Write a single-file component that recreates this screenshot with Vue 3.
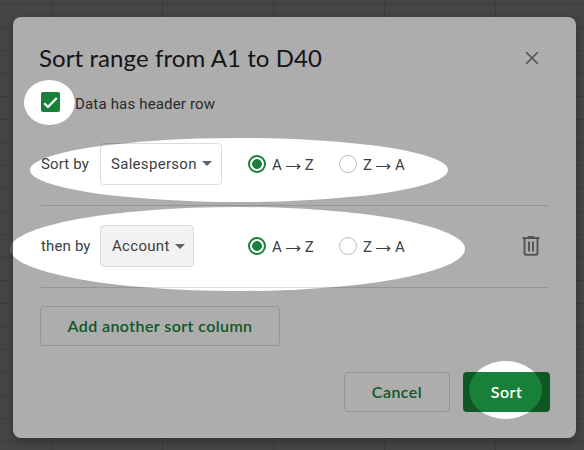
<script setup>
import { ref } from 'vue'

const hasHeader = ref(true)
const rows = ref([
  { label: 'Sort by', column: 'Salesperson', order: 'asc' },
  { label: 'then by', column: 'Account', order: 'asc', removable: true },
])
const orders = [
  { id: 'asc', from: 'A', to: 'Z' },
  { id: 'desc', from: 'Z', to: 'A' },
]
const spotlights = [
  { cx: 49.4, cy: 102.5, rx: 25.4, ry: 22.5 },
  { cx: 239, cy: 170, rx: 209, ry: 32 },
  { cx: 237.5, cy: 249, rx: 227.5, ry: 42 },
  { cx: 505.5, cy: 390, rx: 36.5, ry: 29 },
]
</script>

<template>
  <main class="sheet">
    <section class="dialog">
      <header class="head">
        <h1 class="title">Sort range from A1 to D40</h1>
        <button class="close" aria-label="Close">
          <svg width="14" height="14" viewBox="0 0 14 14"><path d="M1.2 1.2 12.8 12.8M12.8 1.2 1.2 12.8" /></svg>
        </button>
      </header>

      <div class="header-option" @click="hasHeader = !hasHeader">
        <span class="checkbox">
          <svg v-if="hasHeader" width="19" height="20" viewBox="0 0 19 20"><path d="M3.2 11.2 7 15 15.8 6" /></svg>
        </span>
        <span class="option-text">Data has header row</span>
      </div>

      <div v-for="row in rows" :key="row.label" class="sort-row">
        <span class="row-label">{{ row.label }}</span>
        <div class="select-cell">
          <button class="select" :class="{ shaded: row.removable }">
            <span class="select-text">{{ row.column }}</span><i class="caret"></i>
          </button>
        </div>
        <div v-for="o in orders" :key="o.id" class="order" @click="row.order = o.id">
          <span class="radio" :class="{ on: row.order === o.id }"></span>
          <span class="order-text">
            <span class="letter">{{ o.from }}</span>
            <svg width="15" height="7" viewBox="0 0 15 7"><path d="M0 3.5H14M11 1 13.8 3.5 11 6" /></svg>
            <span class="letter">{{ o.to }}</span>
          </span>
        </div>
        <button v-if="row.removable" class="trash" aria-label="Remove">
          <svg width="18" height="20" viewBox="0 0 18 20">
            <path d="M0.5 2H17.5M6 1H12" />
            <path d="M2.5 2V17.6Q2.5 18.7 3.6 18.7H14.4Q15.5 18.7 15.5 17.6V2" />
            <path d="M7 5.5V15.5M11 5.5V15.5" />
          </svg>
        </button>
      </div>

      <button class="outlined add"><span>Add another sort column</span></button>

      <footer class="actions">
        <button class="outlined cancel"><span>Cancel</span></button>
        <button class="sort"><span>Sort</span></button>
      </footer>
    </section>

    <svg class="dimmer" width="584" height="450" viewBox="0 0 584 450">
      <mask id="spots">
        <rect width="584" height="450" fill="#fff" />
        <ellipse v-for="(s, i) in spotlights" :key="i" v-bind="s" fill="#000" />
      </mask>
      <rect width="584" height="450" fill="#000" fill-opacity="0.32" mask="url(#spots)" />
    </svg>
  </main>
</template>

<style>
body { margin: 0; }
</style>

<style scoped>
* { box-sizing: border-box; }
.sheet {
  position: relative;
  width: 584px;
  height: 450px;
  padding: 17px 8px 12px 13px;
  overflow: hidden;
  background-color: #666;
  background-image:
    linear-gradient(#595959 1px, transparent 1px),
    linear-gradient(90deg, #595959 1px, transparent 1px);
  background-size: 111px 23px;
  background-position: 51px 4px;
  font-family: Roboto, "Liberation Sans", sans-serif;
  color: #3c4043;
}
.dialog {
  display: flex;
  flex-direction: column;
  width: 563px;
  height: 421px;
  padding: 24px 26px 26px 27px;
  border-radius: 8px;
  background: #fff;
  box-shadow: 0 3px 9px rgba(0, 0, 0, 0.28);
}
button { margin: 0; padding: 0; border: 0; background: none; font: inherit; color: inherit; }
svg { display: block; fill: none; flex: none; }
span { white-space: nowrap; }
.head { display: flex; justify-content: space-between; height: 36px; }
.title {
  margin: 0 0 0 -1px;
  font: 400 24px/34px Lato, Roboto, sans-serif;
  letter-spacing: 0.08px;
  color: #202124;
  white-space: nowrap;
}
.close { display: flex; padding: 10px 11px 0 0; height: 24px; }
.close path { stroke: #75777a; stroke-width: 1.6; }
.header-option { display: flex; align-items: center; height: 54px; margin-top: -1px; padding: 0 0 2px 1px; }
.checkbox { width: 19px; height: 20px; border-radius: 2px; background: #188038; }
.checkbox path { stroke: #fff; stroke-width: 2.2; }
.option-text { padding: 4px 0 0 15px; font-size: 15px; letter-spacing: 0.17px; }
.sort-row {
  display: flex;
  align-items: center;
  width: 507px;
  height: 82px;
  margin-left: 1px;
  padding-bottom: 1px;
  border-bottom: 1px solid #dadce0;
}
.header-option + .sort-row { height: 76px; padding-bottom: 8px; }
.row-label { width: 59px; font-size: 15px; letter-spacing: 0.15px; }
.select-cell { width: 148px; }
.select {
  display: flex;
  align-items: center;
  justify-content: space-between;
  width: 122px;
  height: 42px;
  padding: 0 9px 0 10px;
  border: 1px solid #dadce0;
  border-radius: 4px;
  background: #fff;
}
.select.shaded { width: 94px; padding: 0 8px 0 11px; background: #f2f2f2; }
.select-text { font-size: 15px; letter-spacing: 0.3px; }
.caret { border: 5px solid transparent; border-top-color: #5f6368; border-bottom: 0; }
.order { display: flex; align-items: center; width: 91px; }
.radio {
  width: 18px;
  height: 18px;
  margin-right: 6px;
  border: 1px solid #bdbdbd;
  border-radius: 50%;
}
.radio.on {
  border: 2px solid #188038;
  background: radial-gradient(circle, #188038 4.5px, #fff 5.2px);
}
.order-text { display: flex; align-items: center; gap: 4px; padding-top: 2px; }
.letter { font-size: 15px; }
.order path { stroke: #3c4043; stroke-width: 1.2; }
.order-text svg { margin-top: 3px; }
.trash { display: flex; margin: 0 8px 0 auto; }
.trash path { stroke: #7b8087; stroke-width: 2; }
.outlined {
  height: 40px;
  border: 1px solid #dadce0;
  border-radius: 4px;
  color: #188038;
}
.outlined, .sort { font: 600 16px/38px Lato, Roboto, sans-serif; }
.outlined span { display: block; margin-top: -1px; }
.add { width: 240px; margin-top: 18px; letter-spacing: 0.42px; }
.actions { display: flex; justify-content: flex-end; gap: 13px; margin-top: auto; }
.cancel { width: 106px; letter-spacing: 0.45px; }
.sort { width: 87px; height: 40px; border-radius: 4px; background: #188038; color: #fff; letter-spacing: 0.45px; }
.sort span { display: block; margin-top: -1px; }
.dimmer { position: absolute; inset: 0; pointer-events: none; }
</style>
